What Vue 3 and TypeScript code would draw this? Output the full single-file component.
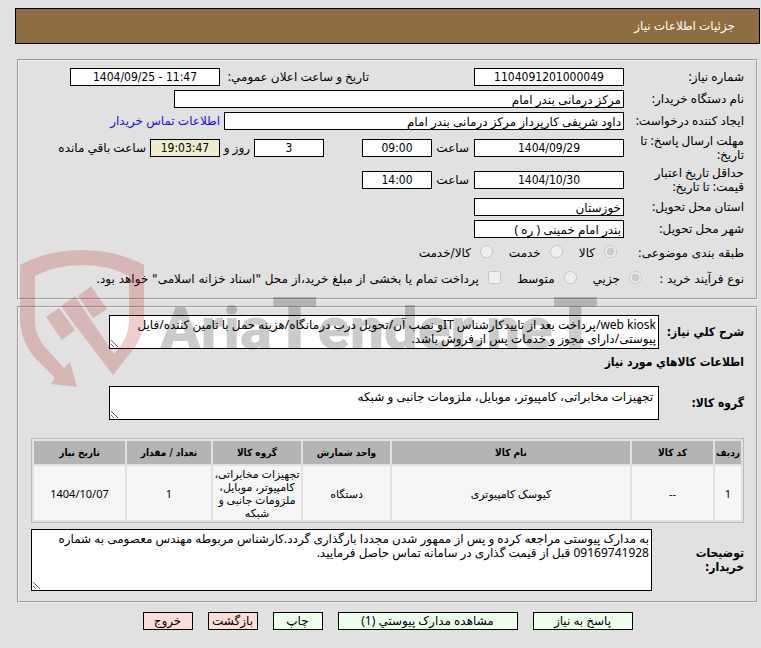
<script setup lang="ts">
interface Column { label: string; key: string }
const columns: Column[] = [
  { key: 'row', label: 'ردیف' },
  { key: 'code', label: 'کد کالا' },
  { key: 'item', label: 'نام کالا' },
  { key: 'unit', label: 'واحد شمارش' },
  { key: 'category', label: 'گروه کالا' },
  { key: 'qty', label: 'تعداد / مقدار' },
  { key: 'date', label: 'تاریخ نیاز' },
]
const items: Record<string, string>[] = [
  {
    row: '1',
    code: '--',
    item: 'کیوسک کامپیوتری',
    unit: 'دستگاه',
    category: 'تجهیزات مخابراتی، کامپیوتر، موبایل، ملزومات جانبی و شبکه',
    qty: '1',
    date: '1404/10/07',
  },
]
const actions = [
  { text: 'پاسخ به نیاز', kind: 'go w100' },
  { text: 'مشاهده مدارک پیوستي (1)', kind: 'go w180' },
  { text: 'چاپ', kind: 'go w50' },
  { text: 'بازگشت', kind: 'stop w50' },
  { text: 'خروج', kind: 'stop w50' },
]
const summary = 'web kiosk/پرداخت بعد از تاییدکارشناس ITو نصب آن/تحویل درب درمانگاه/هزینه حمل با تامین کننده/فایل پیوستی/دارای مجوز و خدمات پس از فروش باشد.'
const group = 'تجهیزات مخابراتی، کامپیوتر، موبایل، ملزومات جانبی و شبکه'
const notes = 'به مدارک پیوستی مراجعه کرده و پس از ممهور شدن مجددا بارگذاری گردد.کارشناس مربوطه مهندس معصومی به شماره 09169741928 قبل از قیمت گذاری در سامانه تماس حاصل فرمایید.'
</script>

<template>
  <main class="page" dir="rtl" lang="fa">
    <h1 class="title">جزئیات اطلاعات نیاز</h1>

    <section class="panel details">
      <div class="line">
        <label class="name" for="no">شماره نیاز:</label>
        <input id="no" class="box mid" value="1104091201000049" readonly>
        <label class="announce" for="announce">تاریخ و ساعت اعلان عمومي:</label>
        <input id="announce" class="box mid" dir="ltr" value="1404/09/25 - 11:47" readonly>
      </div>
      <div class="line">
        <label class="name" for="org">نام دستگاه خریدار:</label>
        <input id="org" class="box org" value="مرکز درمانی بندر امام" readonly>
      </div>
      <div class="line">
        <label class="name" for="creator">ایجاد کننده درخواست:</label>
        <input id="creator" class="box creator" value="داود شریفی کارپرداز مرکز درمانی بندر امام" readonly>
        <a class="contact" href="#contact">اطلاعات تماس خریدار</a>
      </div>
      <div class="line tall">
        <label class="name" for="due">مهلت ارسال پاسخ: تا<br>تاریخ:</label>
        <input id="due" class="box mid" value="1404/09/29" readonly>
        <label class="hour" for="dueh">ساعت</label>
        <input id="dueh" class="box short" value="09:00" readonly>
        <input class="box short days" aria-label="روز" value="3" readonly>
        <label class="and" for="left">روز و</label>
        <input id="left" class="box short remain" value="19:03:47" readonly>
        <span class="after">ساعت باقي مانده</span>
      </div>
      <div class="line tall">
        <label class="name" for="valid">حداقل تاریخ اعتبار<br>قیمت: تا تاریخ:</label>
        <input id="valid" class="box mid" value="1404/10/30" readonly>
        <label class="hour" for="validh">ساعت</label>
        <input id="validh" class="box short" value="14:00" readonly>
      </div>
      <div class="line">
        <label class="name" for="province">استان محل تحویل:</label>
        <input id="province" class="box place" value="خوزستان" readonly>
      </div>
      <div class="line">
        <label class="name" for="city">شهر محل تحویل:</label>
        <input id="city" class="box place" value="بندر امام خمینی ( ره )" readonly>
      </div>
      <div class="line choices">
        <span class="name">طبقه بندی موضوعی:</span>
        <label class="opt"><input type="radio" name="kind" checked disabled>کالا</label>
        <label class="opt"><input type="radio" name="kind" disabled>خدمت</label>
        <label class="opt"><input type="radio" name="kind" disabled>کالا/خدمت</label>
      </div>
      <div class="line choices process">
        <span class="name">نوع فرآیند خرید :</span>
        <label class="opt"><input type="radio" name="process" checked disabled>جزیي</label>
        <label class="opt"><input type="radio" name="process" disabled>متوسط</label>
        <label class="opt"><input type="checkbox" disabled>پرداخت تمام یا بخشی از مبلغ خرید،از محل "اسناد خزانه اسلامی" خواهد بود.</label>
      </div>
    </section>

    <section class="panel goods">
      <div class="block">
        <label for="summary">شرح کلي نیاز:</label>
        <textarea id="summary" class="brief" :value="summary" readonly></textarea>
      </div>
      <h2>اطلاعات کالاهاي مورد نیاز</h2>
      <div class="block">
        <label for="group">گروه کالا:</label>
        <textarea id="group" class="brief roomy" :value="group" readonly></textarea>
      </div>
      <table>
        <thead>
          <tr><th v-for="c in columns" :key="c.key" :class="`col-${c.key}`">{{ c.label }}</th></tr>
        </thead>
        <tbody>
          <tr v-for="item in items" :key="item.row">
            <td v-for="c in columns" :key="c.key">{{ item[c.key] }}</td>
          </tr>
        </tbody>
      </table>
      <div class="block">
        <label class="wide" for="notes">توضیحات<br>خریدار:</label>
        <textarea id="notes" class="notes" :value="notes" readonly></textarea>
      </div>
    </section>

    <nav class="actions">
      <button v-for="a in actions" :key="a.text" type="button" :class="a.kind">{{ a.text }}</button>
    </nav>

    <div class="mark" dir="ltr" aria-hidden="true">
      <svg width="124" height="138" viewBox="0 0 124 138">
        <g fill="#b40f0f">
          <path d="M0 15Q28 0 62 0T124 15V70Q124 84 115 97L93 125L58 79L71 70L94 104Q109 88 109 72V26Q88 15 62 15T15 26V72Q15 84 24 96L44 118L50 112L57 137L31 134L35 128L15 108Q0 90 0 68Z" />
          <path d="M26 67L39 58L55 80L42 90ZM41 56L55 46L71 70L58 79ZM58 46L71 36L87 59L73 68Z" />
        </g>
      </svg>
      <span class="word">Aria<b>T</b>ender.ne<b>T</b></span>
    </div>
  </main>
</template>

<style>
body { background: #e1e1e1; }
</style>

<style scoped>
.page { position: relative; box-sizing: border-box; padding: 8px 1px 0 15px; font: 12px/14px "Noto Sans", "DejaVu Sans", sans-serif; color: #000; }
.title { margin: 0 0 15px; padding: 10px 24px; border: 1px solid #000; background: #8f6d40; color: #fff; font-size: 12px; line-height: 14px; font-weight: 400; }
.panel { box-sizing: border-box; margin: 0 2px 6px; border: 2px groove #f0f0f0; }
.details { padding: 5px 12px 6px; }
.line { display: flex; align-items: center; height: 22px; white-space: nowrap; }
.tall { height: 32px; }
.name { flex: 0 0 120px; }
.box { flex-shrink: 0; box-sizing: border-box; height: 18px; padding: 0 2px; border: 1px solid #000; border-radius: 0; background: #fff; color: #000; font: inherit; outline: 0; }
.mid, .short { font-family: "DejaVu Sans Condensed", "DejaVu Sans", sans-serif; text-align: center; }
.mid { width: 150px; }
.short { width: 70px; }
.announce { box-sizing: border-box; width: 254px; padding-right: 105px; }
.org { width: 450px; }
.creator { width: 400px; }
.contact { margin-right: 4px; color: #1a0de8; text-decoration: none; }
.hour { box-sizing: border-box; width: 42px; padding-right: 5px; }
.days { margin-right: 38px; }
.and { box-sizing: border-box; width: 34px; padding-right: 4px; }
.remain { background: #eeeccc; }
.after { margin-right: 4px; }
.place { width: 150px; }
.choices { height: 26px; gap: 16px; font-family: "DejaVu Sans", sans-serif; }
.choices .name { flex-basis: 111px; }
.process .name { flex-basis: 86px; }
.opt { display: flex; align-items: center; gap: 9px; }
.opt input { flex-shrink: 0; margin: 0 0 3px; width: 13px; height: 13px; }
.goods { padding: 7px 12px 10px; }
.block { display: flex; align-items: center; font: 700 12px/14px "DejaVu Sans Condensed", "DejaVu Sans", sans-serif; }
.block label { flex: 0 0 85px; }
.block .wide { flex-basis: 92px; }
textarea { display: block; box-sizing: border-box; margin: 0; padding: 2px; border: 1px solid #000; background: #fff; color: #000; font: 12px/14px "Noto Sans", "DejaVu Sans", sans-serif; overflow: hidden; resize: both; outline: 0; }
.brief { width: 550px; height: 34px; }
.roomy { padding: 3px 5px; }
.notes { flex: 1; height: 62px; }
h2 { margin: 6px 0 17px; font: 700 12px/14px "DejaVu Sans Condensed", "DejaVu Sans", sans-serif; }
table { width: 100%; margin: 18px 0 6px; border: 1px solid #bbb; border-spacing: 2px; table-layout: fixed; font-size: 11px; line-height: 13px; text-align: center; }
th { height: 23px; padding: 0; background: #b4b4b4; font-family: "DejaVu Sans Condensed", "DejaVu Sans", sans-serif; font-size: 10px; }
td { padding: 1px 0; background: #f6f6f6; }
.col-row { width: 26px; }
.col-code { width: 81px; }
.col-unit { width: 87px; }
.col-category { width: 88px; }
.col-qty { width: 84px; }
.col-date { width: 91px; }
.actions { display: flex; justify-content: center; gap: 15px; margin-top: 9px; }
button { box-sizing: border-box; height: 18px; padding: 0; border: 1px solid #000; font: inherit; line-height: 14px; color: #000; }
.go { background: #eeffee; }
.stop { background: #ffdddd; }
.w100 { width: 100px; }
.w180 { width: 180px; }
.w50 { width: 50px; }
.mark { position: absolute; left: 20px; top: 250px; display: flex; gap: 16px; opacity: .2; pointer-events: none; }
.word { font: 900 60px/158px Roboto, sans-serif; }
.word b { font-size: 72px; font-weight: 900; line-height: 1; }
</style>
